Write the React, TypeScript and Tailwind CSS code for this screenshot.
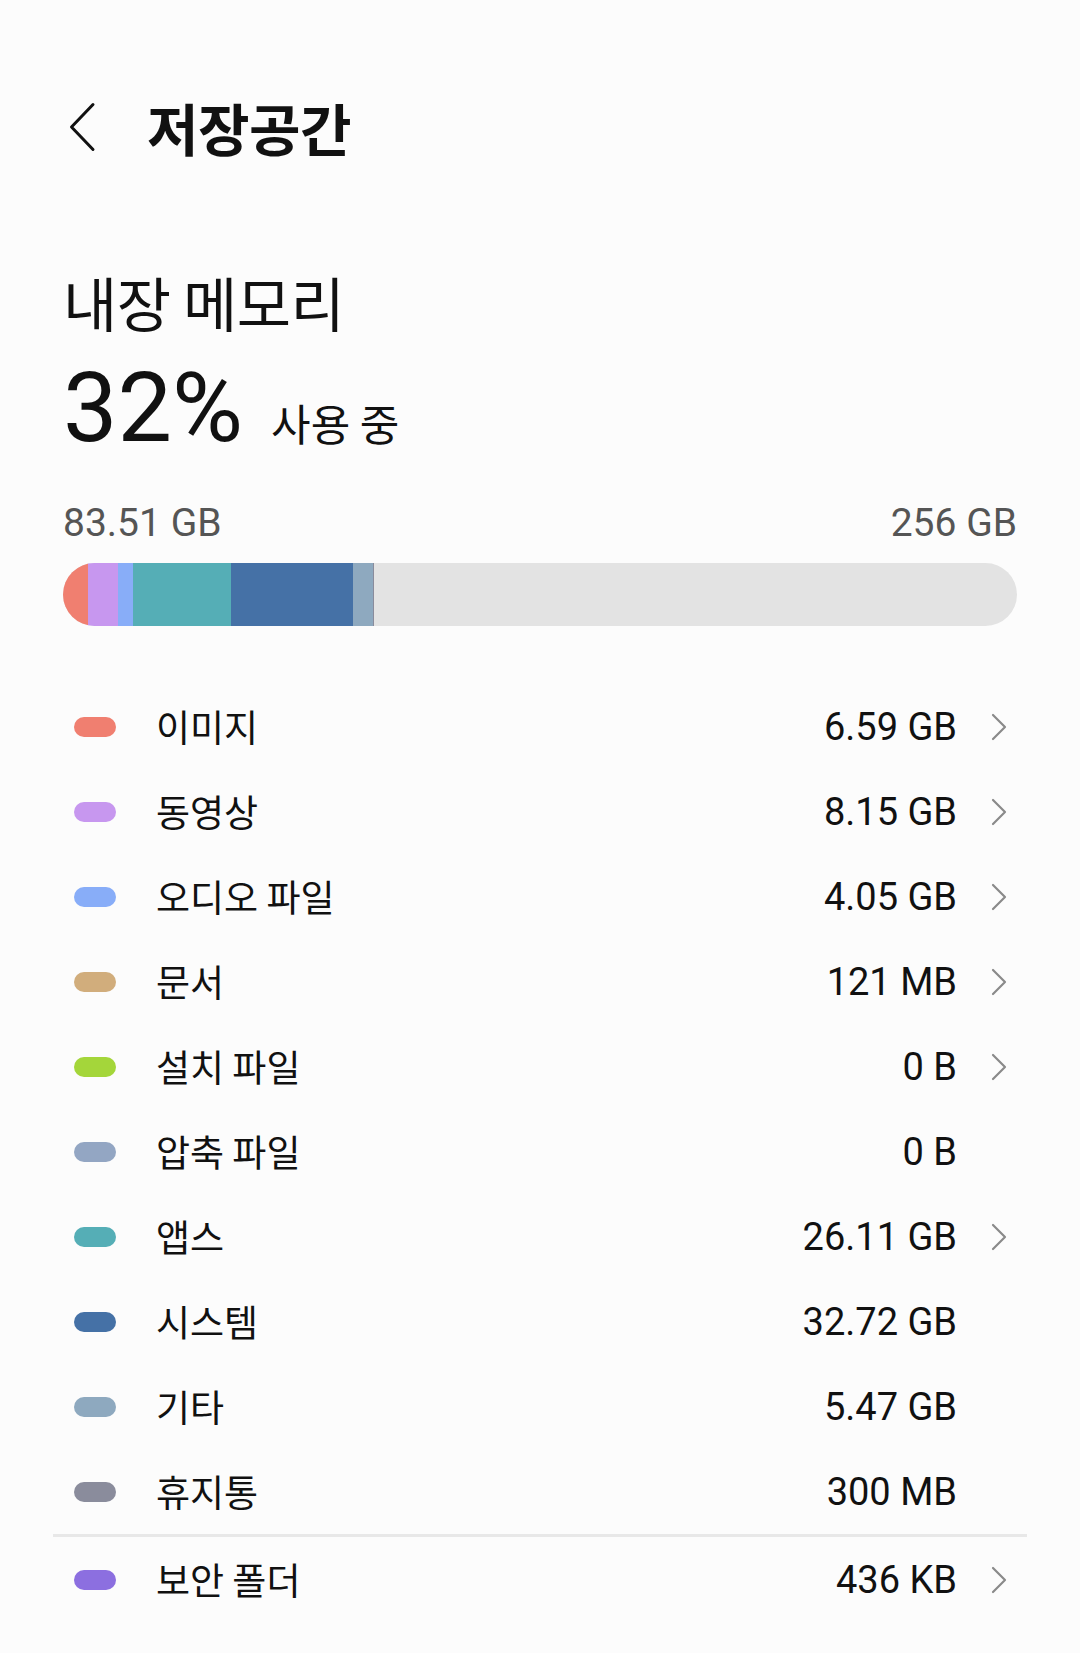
import React from "react";

type Item = { label: string; value: string; color: string; chevron: boolean };

const items: Item[] = [
  { label: "이미지", value: "6.59 GB", color: "bg-[#f07f70]", chevron: true },
  { label: "동영상", value: "8.15 GB", color: "bg-[#c797ef]", chevron: true },
  { label: "오디오 파일", value: "4.05 GB", color: "bg-[#88adf8]", chevron: true },
  { label: "문서", value: "121 MB", color: "bg-[#d1ad7c]", chevron: true },
  { label: "설치 파일", value: "0 B", color: "bg-[#a4d63a]", chevron: true },
  { label: "압축 파일", value: "0 B", color: "bg-[#93a6c3]", chevron: false },
  { label: "앱스", value: "26.11 GB", color: "bg-[#55aeb6]", chevron: true },
  { label: "시스템", value: "32.72 GB", color: "bg-[#4571a6]", chevron: false },
  { label: "기타", value: "5.47 GB", color: "bg-[#8ea9bf]", chevron: false },
  { label: "휴지통", value: "300 MB", color: "bg-[#8a8c9c]", chevron: false },
];

const segments = [
  { gb: 6.59, color: "#f07f70" },
  { gb: 8.15, color: "#c797ef" },
  { gb: 4.05, color: "#88adf8" },
  { gb: 0.121, color: "#d1ad7c" },
  { gb: 26.11, color: "#55aeb6" },
  { gb: 32.72, color: "#4571a6" },
  { gb: 5.47, color: "#8ea9bf" },
  { gb: 0.3, color: "#8a8c9c" },
];

const KR = { fontFamily: '"Noto Sans CJK KR", "Noto Sans", sans-serif' };
const NUM = { fontFamily: 'Roboto, "Noto Sans", sans-serif' };

function Chevron() {
  return (
    <svg width="16" height="28" viewBox="0 0 16 28" fill="none">
      <path d="M2 2 L14 14 L2 26" stroke="#8a8a8a" strokeWidth="2.2" strokeLinecap="round" strokeLinejoin="round" />
    </svg>
  );
}

function Row({ item }: { item: Item }) {
  return (
    <div className="flex h-[85px] items-center">
      <div className={`ml-[11px] h-[20px] w-[42px] rounded-full ${item.color}`} />
      <div className="ml-[40px] flex-1 text-[37px] leading-none text-[#111]" style={KR}>
        {item.label}
      </div>
      <div className="text-[38px] leading-none text-[#111]" style={NUM}>
        {item.value}
      </div>
      <div className="ml-[34px] mr-[10px] flex w-[16px] items-center">
        {item.chevron ? <Chevron /> : null}
      </div>
    </div>
  );
}

export default function App() {
  return (
    <div className="min-h-[1653px] w-[1080px] bg-[#fcfcfc] px-[63px] pt-[80px]">
      <div className="flex h-[94px] items-center">
        <svg width="28" height="50" viewBox="0 0 28 50" fill="none" className="ml-[5px]">
          <path d="M25 2.5 L3.5 25 L25 47.5" stroke="#111" strokeWidth="3" strokeLinecap="round" strokeLinejoin="round" />
        </svg>
        <div className="ml-[51px] text-[56px] font-bold leading-none tracking-[-0.01em] text-[#111]" style={KR}>
          저장공간
        </div>
      </div>

      <div className="mt-[98px] text-[59px] leading-none tracking-[-0.01em] text-[#111]" style={KR}>
        내장 메모리
      </div>

      <div className="mt-[29px] flex items-baseline">
        <span className="text-[97px] leading-none text-[#111]" style={NUM}>
          32%
        </span>
        <span className="ml-[28px] text-[43px] leading-none text-[#111]" style={KR}>
          사용 중
        </span>
      </div>

      <div className="mt-[47px] flex justify-between text-[39px] leading-none text-[#555]" style={NUM}>
        <span>83.51 GB</span>
        <span>256 GB</span>
      </div>

      <div className="mt-[20px] flex h-[63px] w-full overflow-hidden rounded-full bg-[#e3e3e3]">
        {segments.map((s, i) => (
          <div key={i} className="h-full" style={{ width: `${(s.gb / 256) * 100}%`, backgroundColor: s.color }} />
        ))}
      </div>

      <div className="mt-[58px]">
        {items.map((it) => (
          <Row key={it.label} item={it} />
        ))}
      </div>

      <div className="-mx-[10px] h-[3px] bg-[#e8e8e8]" />

      <Row item={{ label: "보안 폴더", value: "436 KB", color: "bg-[#8c6fe0]", chevron: true }} />
    </div>
  );
}
